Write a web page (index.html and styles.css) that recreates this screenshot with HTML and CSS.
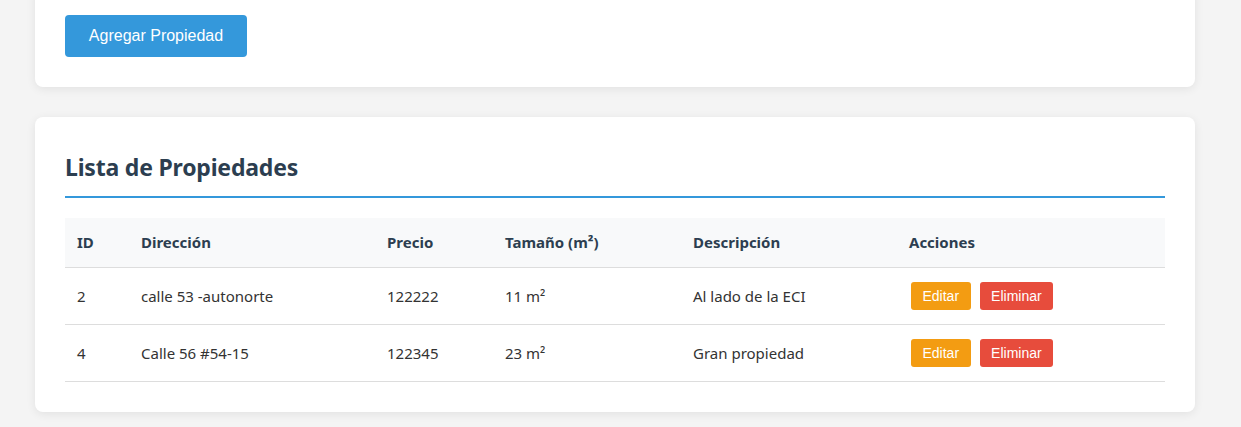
FILE: index.html
```html
<!DOCTYPE html>
<html lang="es">
<head>
<meta charset="utf-8">
<title>Propiedades</title>
<link rel="stylesheet" href="styles.css">
</head>
<body>
<main class="container">
  <section class="card card-form">
    <button class="btn btn-primary" type="button">Agregar Propiedad</button>
  </section>
  <section class="card">
    <h2 class="card-title">Lista de Propiedades</h2>
    <table class="table">
      <colgroup>
        <col class="c-id"><col class="c-dir"><col class="c-precio"><col class="c-tam"><col class="c-desc"><col class="c-acc">
      </colgroup>
      <thead>
        <tr><th>ID</th><th>Dirección</th><th>Precio</th><th>Tamaño (m²)</th><th>Descripción</th><th>Acciones</th></tr>
      </thead>
      <tbody>
        <tr>
          <td>2</td><td>calle 53 -autonorte</td><td>122222</td><td>11 m²</td><td>Al lado de la ECI</td>
          <td><div class="actions"><button class="btn btn-sm btn-edit" type="button">Editar</button><button class="btn btn-sm btn-delete" type="button">Eliminar</button></div></td>
        </tr>
        <tr>
          <td>4</td><td>Calle 56 #54-15</td><td>122345</td><td>23 m²</td><td>Gran propiedad</td>
          <td><div class="actions"><button class="btn btn-sm btn-edit" type="button">Editar</button><button class="btn btn-sm btn-delete" type="button">Eliminar</button></div></td>
        </tr>
      </tbody>
    </table>
  </section>
</main>
</body>
</html>
```

FILE: styles.css
```css
* { box-sizing: border-box; }
html, body {
  margin: 0;
  padding: 0;
  background: #f4f4f4;
  font-family: "Noto Sans", "Open Sans", sans-serif;
  color: #333;
}
.container {
  width: 1160px;
  margin: -15px 0 0 35px;
  display: flex;
  flex-direction: column;
  gap: 30px;
  padding-bottom: 20px;
}
.card {
  background: #fff;
  border-radius: 8px;
  box-shadow: 0 2px 10px rgba(0, 0, 0, 0.08);
  padding: 30px;
}
.btn {
  font-family: "Liberation Sans", Arial, sans-serif;
  border: none;
  color: #fff;
  cursor: pointer;
  border-radius: 4px;
}
.btn-primary {
  background: #3498db;
  font-size: 16px;
  line-height: 18px;
  padding: 12px 23px;
  width: 182px;
}
.card-title {
  margin: 0 0 20px;
  font-size: 23px;
  letter-spacing: -0.2px;
  line-height: 30px;
  font-weight: 700;
  color: #2c3e50;
  padding: 5px 0 14px;
  border-bottom: 2px solid #3498db;
}
.table {
  width: 1100px;
  border-collapse: separate;
  border-spacing: 0;
  table-layout: fixed;
  font-size: 15px;
}
.c-id { width: 64px; }
.c-dir { width: 246px; }
.c-precio { width: 118px; }
.c-tam { width: 188px; }
.c-desc { width: 216px; }
.c-acc { width: 268px; }
.table th {
  background: #f8f9fa;
  text-align: left;
  font-weight: 700;
  color: #2c3e50;
  padding: 12px 12px 13px;
  line-height: 24px;
  border-bottom: 1px solid #ddd;
}
.table td {
  padding: 14px 12px;
  line-height: 28px;
  height: 57px;
  border-bottom: 1px solid #ddd;
  vertical-align: middle;
}
.actions {
  display: flex;
  align-items: center;
  gap: 9px;
  height: 28px;
  padding-left: 2px;
}
.btn-sm {
  font-size: 14px;
  line-height: 16px;
  height: 28px;
  padding: 6px 11.5px;
  border-radius: 3px;
}
.btn-edit { background: #f39c12; }
.btn-delete { background: #e74c3c; }
```
